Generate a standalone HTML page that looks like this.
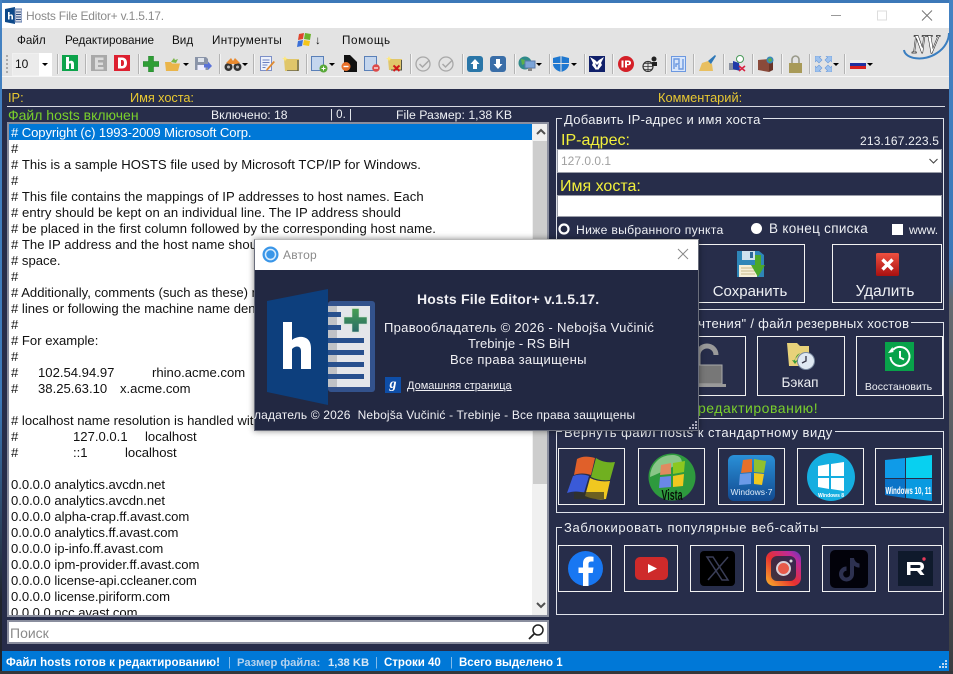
<!DOCTYPE html>
<html lang="ru"><head><meta charset="utf-8"><title>Hosts File Editor+</title>
<style>
*{box-sizing:border-box}
html,body{margin:0;padding:0;width:953px;height:674px;overflow:hidden;background:#3c78b8;font-family:"Liberation Sans","Noto Sans CJK SC",sans-serif}
.a,.t,svg.i{position:absolute}
.t{white-space:nowrap;line-height:16px;height:16px}
#bgr{position:absolute;left:949px;top:0;width:4px;height:674px;background:linear-gradient(#4482c2 0,#3c78b8 260px,#666a70 300px,#55585c 500px,#3a3c40 674px)}
#bgl{position:absolute;left:0;top:0;width:2px;height:674px;background:linear-gradient(#4482c2 0,#3c78b8 400px,#20242c 600px,#20242c 674px)}
#bgb{position:absolute;left:0;top:671px;width:953px;height:3px;background:#34363a}
#title{left:2px;top:3px;width:947px;height:25px;background:#fff}
#bar{left:2px;top:28px;width:947px;height:61px;background:#e3e3e3}
#main{left:2px;top:89px;width:947px;height:562px;background:#272d4a}
.m{font-size:11.7px;color:#111;top:33px}
.sep{position:absolute;top:54px;width:1px;height:20px;background:#b4b4b4;box-shadow:1px 0 0 #f4f4f4}
.dd{position:absolute;top:63px;width:0;height:0;border:3px solid transparent;border-top:3px solid #000;border-bottom:0}
.y{color:#e8c832;font-size:12.8px}
.w{color:#eef0f4}
#list{left:7px;top:122px;width:542px;height:495px;background:#fff;border:2px solid #8a8e9e;overflow:hidden}
#lines{position:absolute;left:0;top:0;width:523px;font-size:13.1px;color:#111}
#lines div{height:16px;line-height:18px;padding-left:2px;white-space:pre;position:relative}
#lines div.s{background:#0078d7;color:#fff;letter-spacing:-.1px}
#lines div.l{letter-spacing:.07px}
#lines div.d{letter-spacing:-.04px}
#lines span{position:absolute;top:0}
.g{position:absolute;border:1px solid #dfe2ea}
.gt{position:absolute;background:#272d4a;color:#eef0f4;font-size:13px;line-height:14px;white-space:nowrap;padding:0 2px}
.b{position:absolute;border:1px solid #f2f2f2}
.bl{position:absolute;color:#eef0f4;text-align:center;white-space:nowrap}
#dlg{left:254px;top:239px;width:445px;height:192px;background:#222842;box-shadow:0 0 6px rgba(0,0,0,.45);border:1px solid #6a6e7c;border-top:1px solid #bbb}
.dt{position:absolute;color:#f0f0f4;white-space:nowrap;line-height:16px;height:16px}
#status{left:2px;top:651px;width:947px;height:20px;background:#0078d7}
.st{position:absolute;top:655px;font-size:11.5px;font-weight:bold;color:#fff;line-height:16px;white-space:nowrap}
</style></head><body>
<div id="bgr"></div><div id="bgl"></div><div id="bgb"></div>

<div class="a" id="title"></div>
<svg class="i" style="left:5px;top:7px" width="17" height="17" viewBox="0 0 17 17"><path d="M0 2l10-2v17l-10-2z" fill="#0e4a8a"/><rect x="10" y="2" width="7" height="13" fill="#d6dbe6" stroke="#5a76a8"/><path d="M11 5h5M11 7.500h5M11 10h5M11 12.500h5" stroke="#2a4a80"/><path d="M3 5h1.600v3c1.800-1.200 3.400-.5 3.400 1.500v3H6.400v-3c0-1-1-1.200-1.800-.4v3.400H3z" fill="#fff"/></svg>
<div class="t" style="left:26px;top:8px;font-size:12px;color:#8a8a8a;letter-spacing:-.2px">Hosts File Editor+ v.1.5.17.</div>
<svg class="i" style="left:825px;top:8px" width="115" height="16" viewBox="0 0 115 16"><path d="M6 7.500h10" stroke="#999"/><rect x="52.500" y="3" width="9" height="9" fill="none" stroke="#ddd"/><path d="M97 2.500l10 10M107 2.500l-10 10" stroke="#777"/></svg>

<div class="a" id="bar"></div>
<div class="t m" style="left:17px">Файл</div>
<div class="t m" style="left:65px">Редактирование</div>
<div class="t m" style="left:172px">Вид</div>
<div class="t m" style="left:212px;letter-spacing:.3px">Интрументы</div>
<svg class="i" style="left:296px;top:33px" width="17" height="14" viewBox="0 0 17 14"><path d="M3 1l5-1-1 6-5 1z" fill="#e0452c"/><path d="M9 0l6 1-1 6-6-1z" fill="#6cb32c"/><path d="M2 8l5-1-1 6-5 1z" fill="#3a6fd8"/><path d="M8 7l6 1-1 5-6-1z" fill="#f5c518"/></svg>
<div class="t m" style="left:315px">↓</div>
<div class="t m" style="left:342px;letter-spacing:.6px">Помощь</div>

<div class="a" style="left:2px;top:76px;width:947px;height:1px;background:#f6f6f6"></div>
<div class="a" style="left:6px;top:55px;width:2px;height:18px;background:repeating-linear-gradient(#aaa 0 2px,transparent 2px 4px)"></div>
<div class="a" style="left:12px;top:53px;width:40px;height:23px;background:#ebebeb;border:1px solid #f0f0f0"></div>
<div class="a" style="left:39px;top:53px;width:13px;height:23px;background:#fff"></div>
<div class="t" style="left:15px;top:56px;font-size:12px;color:#111">10</div>
<div class="dd" style="left:42px;top:63px"></div>

<!-- separators -->
<i class="sep" style="left:57px"></i><i class="sep" style="left:85px"></i><i class="sep" style="left:138px"></i><i class="sep" style="left:219px"></i><i class="sep" style="left:253px"></i><i class="sep" style="left:306px"></i><i class="sep" style="left:410px"></i><i class="sep" style="left:462px"></i><i class="sep" style="left:514px"></i><i class="sep" style="left:549px"></i><i class="sep" style="left:584px"></i><i class="sep" style="left:612px"></i><i class="sep" style="left:665px"></i><i class="sep" style="left:693px"></i><i class="sep" style="left:723px"></i><i class="sep" style="left:752px"></i><i class="sep" style="left:781px"></i><i class="sep" style="left:809px"></i><i class="sep" style="left:844px"></i>

<!-- toolbar icons -->
<svg class="i" style="left:62px;top:55px" width="16" height="16" viewBox="0 0 16 16"><rect width="16" height="16" fill="#0da34b"/><path d="M4 2h3v4.500c2.500-1.500 5-.5 5 2.500v5H9V9.500c0-1.500-1.200-1.500-2-.7V14H4z" fill="#fff"/></svg>
<svg class="i" style="left:91px;top:55px" width="16" height="16" viewBox="0 0 16 16"><rect width="16" height="16" fill="#a9a9a9"/><path d="M4 2.500h8.500V5H7v2.500h5V10H7v2h5.500v2.500H4z" fill="#dcdcdc"/></svg>
<svg class="i" style="left:114px;top:55px" width="16" height="16" viewBox="0 0 16 16"><rect width="16" height="16" fill="#dd2030"/><path d="M4 2.500h4c3.500 0 5 2.500 5 5.500s-1.500 5.500-5 5.500H4zM7 5v6h1c1.500 0 2-1.200 2-3s-.5-3-2-3z" fill="#fff" fill-rule="evenodd"/></svg>
<svg class="i" style="left:143px;top:56px" width="16" height="16" viewBox="0 0 16 16"><path d="M5.500 0h5v5.500H16v5h-5.500V16h-5v-5.500H0v-5h5.500z" fill="#2f9e35" stroke="#1f7a28" stroke-width=".5"/></svg>
<svg class="i" style="left:165px;top:56px" width="16" height="16" viewBox="0 0 16 16"><path d="M0 6h6l1 1.500h8L13 15H1z" fill="#eab54a"/><path d="M6 6l3-4 1 2 3-1-2 4z" fill="#7ab648"/></svg>
<div class="dd" style="left:183px"></div>
<svg class="i" style="left:195px;top:57px" width="17" height="15" viewBox="0 0 17 15"><path d="M0 0h11l2 2v11H0z" fill="#8a94a8"/><rect x="3" y="1" width="6" height="4" fill="#dfe4ec"/><rect x="2.500" y="8" width="8" height="5" fill="#eef"/><path d="M9 7h4V4.500L17 9l-4 4v-2.500H9z" fill="#5a72d8"/></svg>
<svg class="i" style="left:224px;top:56px" width="18" height="16" viewBox="0 0 18 16"><circle cx="4.500" cy="11" r="4" fill="#333"/><circle cx="13.500" cy="11" r="4" fill="#333"/><path d="M2 7l5-5 2 3 2-3 5 5-4 1H6z" fill="#e88a30"/><circle cx="4.500" cy="11" r="1.500" fill="#bbb"/><circle cx="13.500" cy="11" r="1.500" fill="#bbb"/></svg>
<div class="dd" style="left:242px"></div>
<svg class="i" style="left:260px;top:56px" width="16" height="16" viewBox="0 0 16 16"><rect x=".5" y=".5" width="11" height="14" fill="#eef2fb" stroke="#7c8fc8"/><path d="M2.500 4h7M2.500 6.500h7M2.500 9h5M2.500 11.500h3" stroke="#6c80c0"/><path d="M15 6l-7 8-2 1 .5-2 7-8z" fill="#e08a30"/></svg>
<svg class="i" style="left:282px;top:56px" width="17" height="15" viewBox="0 0 17 15"><path d="M2 3h15v12H3z" fill="#e0c66a"/><path d="M16 4v11H5" fill="none" stroke="#554" stroke-width="1.200"/><path d="M3 0l.8 2 2 .8-2 .8L3 5.500l-.8-2L0 2.800l2-.8z" fill="#ffe97a"/></svg>
<svg class="i" style="left:311px;top:56px" width="17" height="17" viewBox="0 0 17 17"><rect x=".5" y=".5" width="12" height="14" fill="#c4d6ee" stroke="#5a80b8"/><circle cx="12.500" cy="12.500" r="4" fill="#58a838"/><path d="M10.500 12.500h4M12.500 10.500v4" stroke="#fff"/></svg>
<div class="dd" style="left:329px"></div>
<svg class="i" style="left:341px;top:55px" width="16" height="17" viewBox="0 0 16 17"><path d="M3 0h6l7 7v10H3z" fill="#111"/><circle cx="5" cy="11.500" r="4.500" fill="#e8702a"/><path d="M2.500 11.500h5" stroke="#fff" stroke-width="1.400"/></svg>
<svg class="i" style="left:364px;top:56px" width="16" height="16" viewBox="0 0 16 16"><rect x=".5" y=".5" width="12" height="14" fill="#c4d6ee" stroke="#5a80b8"/><circle cx="12" cy="12" r="3.800" fill="#dc4a4a"/><path d="M10 12h4" stroke="#fff" stroke-width="1.200"/></svg>
<svg class="i" style="left:386px;top:56px" width="17" height="16" viewBox="0 0 17 16"><path d="M2 3h14v11H3z" fill="#e0c66a"/><path d="M15.500 4v10H5" fill="none" stroke="#554"/><path d="M3 0l.8 2 2 .8-2 .8L3 5.500l-.8-2L0 2.800l2-.8z" fill="#ffe97a"/><path d="M7.500 9.500l6 5.500M13.500 9.500l-6 5.500" stroke="#d01818" stroke-width="2"/></svg>
<svg class="i" style="left:415px;top:56px" width="17" height="16" viewBox="0 0 17 16"><g fill="none" stroke="#a8a8a8"><circle cx="8" cy="8" r="7" stroke-width="1.300"/><path d="M4.500 8l3 3 7-7" stroke-width="1.500"/></g></svg>
<svg class="i" style="left:438px;top:56px" width="17" height="16" viewBox="0 0 17 16"><g fill="none" stroke="#a8a8a8"><circle cx="8" cy="8" r="7" stroke-width="1.300"/><path d="M4.500 8l3 3 7-7" stroke-width="1.500"/></g></svg>
<svg class="i" style="left:467px;top:56px" width="16" height="16" viewBox="0 0 16 16"><rect width="16" height="16" rx="3" fill="#2a76a8"/><path d="M8 3l4.500 5H10v5H6V8H3.500z" fill="#fff"/></svg>
<svg class="i" style="left:490px;top:56px" width="16" height="16" viewBox="0 0 16 16"><rect width="16" height="16" rx="3" fill="#3a6ea8"/><path d="M8 13L3.500 8H6V3h4v5h2.500z" fill="#fff"/></svg>
<svg class="i" style="left:518px;top:56px" width="18" height="16" viewBox="0 0 18 16"><circle cx="7" cy="7" r="6.500" fill="#2f8a8a"/><path d="M3 3l4 1 1 3-4 2z" fill="#5cb04a"/><rect x="7" y="5" width="10" height="7" fill="#7ca4d8" stroke="#5a7aa8"/><rect x="10" y="12" width="4" height="3" fill="#888"/></svg>
<div class="dd" style="left:536px"></div>
<svg class="i" style="left:553px;top:56px" width="16" height="16" viewBox="0 0 16 16"><path d="M8 0l8 2v6c0 4-4 7-8 8-4-1-8-4-8-8V2z" fill="#1f78d0"/><path d="M8 0v16M0 7.500h16" stroke="#e3e3e3"/></svg>
<div class="dd" style="left:571px"></div>
<svg class="i" style="left:589px;top:56px" width="16" height="16" viewBox="0 0 16 16"><rect width="16" height="16" fill="#10206a"/><path d="M1 1l5 3 2 2 2-2 5-3-3 6 1 2-4 5-1-1-1 1-4-5 1-2z" fill="#fff"/><path d="M8 9l2-2-2 5-2-5z" fill="#10206a"/></svg>
<svg class="i" style="left:618px;top:56px" width="16" height="16" viewBox="0 0 16 16"><circle cx="8" cy="8" r="8" fill="#d42028"/><path d="M3.500 4.500h2v7h-2zM7 4.500h3c2 0 3 1 3 2.400s-1 2.400-3 2.400H9v2.200H7zM9 6v2h.8c.8 0 1.200-.4 1.200-1s-.4-1-1.200-1z" fill="#fff" fill-rule="evenodd"/></svg>
<svg class="i" style="left:642px;top:56px" width="16" height="16" viewBox="0 0 16 16"><circle cx="6" cy="10.500" r="5" fill="none" stroke="#333" stroke-width="1.200"/><path d="M1 10.500h10M6 5.500v10M2.500 7.500h7M2.500 13.500h7" stroke="#333" stroke-width=".8"/><circle cx="12" cy="3" r="2.500" fill="#222"/><rect x="10" y="6" width="5" height="4" fill="#222"/></svg>
<svg class="i" style="left:671px;top:56px" width="15" height="16" viewBox="0 0 15 16"><rect x=".5" y=".5" width="14" height="15" fill="#d8e6fb" stroke="#6c98e0"/><path d="M3 13V3h5v5H5v3M12 3v10H8V9" fill="none" stroke="#6c98e0" stroke-width="1.400"/></svg>
<svg class="i" style="left:699px;top:55px" width="17" height="17" viewBox="0 0 17 17"><path d="M0 16l3-8 6-2 4 3 1 7z" fill="#e8bf60"/><path d="M9 6l7-6 1 1-5 8z" fill="#2e78b8"/></svg>
<svg class="i" style="left:729px;top:55px" width="17" height="17" viewBox="0 0 17 17"><rect x="0" y="8" width="8" height="7" fill="#8890a0"/><path d="M4 6l6 2 1 8-7-2z" fill="#1f3aa8"/><circle cx="11" cy="4" r="3.500" fill="#fff" stroke="#4a9a5a"/><path d="M10 11l6 5M16 11l-6 5" stroke="#d82040" stroke-width="1.500"/></svg>
<svg class="i" style="left:758px;top:56px" width="17" height="16" viewBox="0 0 17 16"><path d="M0 4l11-1v13L0 14z" fill="#8a4a3a"/><path d="M11 3l4 1v10l-4 2z" fill="#6a3428"/><circle cx="12" cy="4" r="3.500" fill="#3a8ab8"/><path d="M10 3l3-1 1 3-3 1z" fill="#5cb04a"/></svg>
<svg class="i" style="left:789px;top:55px" width="13" height="18" viewBox="0 0 13 18"><path d="M3 8V4.500a3.500 3.500 0 0 1 7 0V8" fill="none" stroke="#9a9a8a" stroke-width="1.600"/><rect y="8" width="13" height="10" fill="#a89a58"/></svg>
<svg class="i" style="left:815px;top:56px" width="17" height="16" viewBox="0 0 17 16"><g fill="#9ec2ee" stroke="#6c9ad8" stroke-width=".6"><path d="M0 0h6L4.500 1.500 7 4 4 7 1.500 4.500 0 6z"/><path d="M17 0h-6l1.500 1.500L10 4l3 3 2.500-2.500L17 6z"/><path d="M0 16h6l-1.500-1.500L7 12 4 9l-2.500 2.500L0 10z"/><path d="M17 16h-6l1.500-1.500L10 12l3-3 2.500 2.500L17 10z"/></g></svg>
<div class="dd" style="left:833px"></div>
<svg class="i" style="left:850px;top:60px" width="16" height="9" viewBox="0 0 16 9"><rect width="16" height="3" fill="#eee"/><rect y="3" width="16" height="3" fill="#2030a0"/><rect y="6" width="16" height="3" fill="#d82020"/></svg>
<div class="dd" style="left:867px"></div>

<svg class="i" style="left:903px;top:31px" width="47" height="31" viewBox="0 0 47 31"><path d="M1 19c1 9 20 12 33 3 8-5 12-13 12-20" fill="none" stroke="#3a7ec0" stroke-width="2"/><text x="9" y="22" font-family="Liberation Serif,serif" font-style="italic" font-weight="bold" font-size="26" fill="#fff" stroke="#222" stroke-width=".7" textLength="27" lengthAdjust="spacingAndGlyphs">NV</text></svg>

<!-- main -->
<div class="a" id="main"></div>
<div class="t y" style="left:8px;top:90px">IP:</div>
<div class="t y" style="left:130px;top:90px;letter-spacing:-.08px">Имя хоста:</div>
<div class="t y" style="left:658px;top:90px">Комментарий:</div>
<div class="a" style="left:7px;top:106px;width:938px;height:1px;background:#d8dae2"></div>
<div class="t" style="left:8px;top:107px;font-size:14px;color:#7ad02c">Файл hosts включен</div>
<div class="t w" style="left:211px;top:107px;font-size:12.2px">Включено: 18</div>
<div class="t w" style="left:330px;top:107px;font-size:11.5px">| 0. |</div>
<div class="t w" style="left:396px;top:107px;font-size:12.3px">File Размер: 1,38 KB</div>

<div class="a" id="list">
<div id="lines">
<div class="s"># Copyright (c) 1993-2009 Microsoft Corp.</div>
<div>#</div>
<div class="l"># This is a sample HOSTS file used by Microsoft TCP/IP for Windows.</div>
<div>#</div>
<div class="l"># This file contains the mappings of IP addresses to host names. Each</div>
<div class="l"># entry should be kept on an individual line. The IP address should</div>
<div class="l"># be placed in the first column followed by the corresponding host name.</div>
<div class="l"># The IP address and the host name should be separated by at least one</div>
<div># space.</div>
<div>#</div>
<div># Additionally, comments (such as these) may be inserted on individual</div>
<div># lines or following the machine name denoted by a '#' symbol.</div>
<div>#</div>
<div># For example:</div>
<div>#</div>
<div>#<span style="left:29px">102.54.94.97</span><span style="left:143px">rhino.acme.com</span><span style="left:260px"># source server</span></div>
<div>#<span style="left:29px">38.25.63.10</span><span style="left:111px">x.acme.com</span><span style="left:252px"># x client host</span></div>
<div></div>
<div># localhost name resolution is handled within DNS itself.</div>
<div>#<span style="left:64px">127.0.0.1</span><span style="left:136px">localhost</span></div>
<div>#<span style="left:64px">::1</span><span style="left:116px">localhost</span></div>
<div></div>
<div class="d">0.0.0.0 analytics.avcdn.net</div>
<div class="d">0.0.0.0 analytics.avcdn.net</div>
<div class="d">0.0.0.0 alpha-crap.ff.avast.com</div>
<div class="d">0.0.0.0 analytics.ff.avast.com</div>
<div class="d">0.0.0.0 ip-info.ff.avast.com</div>
<div class="d">0.0.0.0 ipm-provider.ff.avast.com</div>
<div class="d">0.0.0.0 license-api.ccleaner.com</div>
<div class="d">0.0.0.0 license.piriform.com</div>
<div class="d">0.0.0.0 ncc.avast.com</div>
</div>
<div class="a" style="left:523px;top:0;width:17px;height:491px;background:#f0f0f0"></div>
<div class="a" style="left:524px;top:17px;width:16px;height:343px;background:#cdcdcd"></div>
<svg class="i" style="left:524px;top:0" width="16" height="491" viewBox="0 0 16 491"><path d="M4 10l4-4 4 4" fill="none" stroke="#505050" stroke-width="2"/><path d="M4 479l4 4 4-4" fill="none" stroke="#505050" stroke-width="2"/></svg>
</div>

<div class="a" style="left:7px;top:620px;width:542px;height:24px;background:#fff;border:2px solid #8a8e9e"></div>
<div class="t" style="left:10px;top:625px;font-size:14px;color:#8a8a8a">Поиск</div>
<svg class="i" style="left:527px;top:623px" width="19" height="18" viewBox="0 0 19 18"><circle cx="11" cy="7" r="5" fill="none" stroke="#222" stroke-width="1.500"/><path d="M7 11l-5 5" stroke="#222" stroke-width="1.800"/></svg>

<!-- group 1 -->
<div class="g" style="left:556px;top:118px;width:388px;height:192px"></div>
<div class="gt" style="left:562px;top:113px;letter-spacing:.3px">Добавить IP-адрес и имя хоста</div>
<div class="t" style="left:561px;top:133px;font-size:16px;color:#f2f03c">IP-адрес:</div>
<div class="t w" style="left:860px;top:133px;font-size:12px;letter-spacing:.18px">213.167.223.5</div>
<div class="a" style="left:557px;top:149px;width:385px;height:24px;background:#fff;border:1px solid #9a9da8"></div>
<div class="t" style="left:561px;top:153px;font-size:12px;color:#a0a0a0">127.0.0.1</div>
<svg class="i" style="left:928px;top:157px" width="11" height="8" viewBox="0 0 11 8"><path d="M1.500 2l4 4 4-4" fill="none" stroke="#444" stroke-width="1.100"/></svg>
<div class="t" style="left:560px;top:179px;font-size:16px;color:#f2f03c">Имя хоста:</div>
<div class="a" style="left:557px;top:195px;width:385px;height:22px;background:#fff;border:1px solid #9a9da8"></div>
<svg class="i" style="left:557px;top:222px" width="14" height="14" viewBox="0 0 14 14"><circle cx="7" cy="7" r="4.500" fill="#222842" stroke="#fff" stroke-width="2.200"/></svg>
<div class="t w" style="left:576px;top:222px;font-size:12.2px;letter-spacing:.28px">Ниже выбранного пункта</div>
<svg class="i" style="left:750px;top:222px" width="13" height="13" viewBox="0 0 13 13"><circle cx="6.500" cy="6.500" r="5.500" fill="#fff"/></svg>
<div class="t w" style="left:769px;top:221px;font-size:13.5px;letter-spacing:.3px">В конец списка</div>
<div class="a" style="left:892px;top:224px;width:11px;height:11px;background:#fff"></div>
<div class="t w" style="left:909px;top:222px;font-size:12.2px">www.</div>

<div class="b" style="left:690px;top:244px;width:115px;height:59px"></div>
<svg class="i" style="left:737px;top:250px" width="28" height="28" viewBox="0 0 28 28"><path d="M0 1h22l5 4v22H0z" fill="#2e86b8"/><rect x="5" y="1" width="13" height="9" fill="#cfe2ee"/><rect x="13" y="2" width="3" height="6" fill="#2e6a98"/><rect x="2" y="15" width="18" height="12" fill="#f5efd8"/><path d="M4 18h14M4 21h14M4 24h14" stroke="#c8b88a"/><path d="M18 5h6v10h4l-7 12-7-12h4z" fill="#4ca82a"/></svg>
<div class="bl" style="left:695px;top:283px;width:110px;font-size:15px;line-height:17px">Сохранить</div>
<div class="b" style="left:832px;top:244px;width:110px;height:59px"></div>
<svg class="i" style="left:876px;top:253px" width="23" height="23" viewBox="0 0 23 23"><defs><linearGradient id="rg" x1="0" y1="0" x2="0" y2="1"><stop offset="0" stop-color="#ee5040"/><stop offset="1" stop-color="#a81010"/></linearGradient></defs><rect width="23" height="23" rx="1.500" fill="url(#rg)"/><path d="M6.500 6.500l10 10M16.500 6.500l-10 10" stroke="#fff" stroke-width="3.400"/></svg>
<div class="bl" style="left:830px;top:283px;width:110px;font-size:15.4px;line-height:17px">Удалить</div>

<!-- group 2 -->
<div class="g" style="left:556px;top:322px;width:388px;height:97px"></div>
<div class="gt" style="left:581px;top:317px;letter-spacing:.32px">Файл "только для чтения" / файл резервных хостов</div>
<div class="b" style="left:660px;top:336px;width:86px;height:60px"></div>
<svg class="i" style="left:680px;top:343px" width="46" height="47" viewBox="0 0 46 47"><path d="M18 22V12a9 9 0 0 1 18 0" fill="none" stroke="#9a9a9a" stroke-width="5"/><rect x="5" y="22" width="37" height="19" fill="#777" stroke="#aaa"/><path d="M2 41h44v3H2z" fill="#9a9a9a"/></svg>
<div class="b" style="left:757px;top:336px;width:88px;height:60px"></div>
<svg class="i" style="left:786px;top:342px" width="30" height="28" viewBox="0 0 30 28"><path d="M1 1h10l3 3h9v20H3z" fill="#e8d27a"/><circle cx="20" cy="19" r="8.500" fill="#dfe8f2" stroke="#7a8aa0"/><path d="M20 14v5l-4 2" stroke="#334" fill="none" stroke-width="1.300"/><path d="M14 11a9 9 0 0 0-5 8l3-1-3 4-3-4 2 .5" fill="#3a9a3a"/></svg>
<div class="bl" style="left:756px;top:375px;width:88px;font-size:13.6px;line-height:16px">Бэкап</div>
<div class="b" style="left:856px;top:336px;width:87px;height:60px"></div>
<svg class="i" style="left:885px;top:342px" width="29" height="29" viewBox="0 0 29 29"><rect width="29" height="29" fill="#08a24a"/><path d="M8 8a9.500 9.500 0 1 1-2.500 7" fill="none" stroke="#fff" stroke-width="2"/><path d="M3 11l5.500-1-1-5z" fill="#fff"/><path d="M15 9v6.500l4 2" fill="none" stroke="#fff" stroke-width="2"/></svg>
<div class="bl" style="left:855px;top:380px;width:87px;font-size:10.5px;line-height:14px">Восстановить</div>
<div class="t" style="left:698px;top:400px;font-size:14px;color:#7ad02c;letter-spacing:.52px">редактированию!</div>

<!-- group 3 -->
<div class="g" style="left:556px;top:431px;width:388px;height:82px"></div>
<div class="gt" style="left:562px;top:426px;letter-spacing:.5px">Вернуть файл hosts к стандартному виду</div>
<div class="b" style="left:558px;top:448px;width:67px;height:57px"></div>
<svg class="i" style="left:566px;top:455px" width="50" height="46" viewBox="0 0 50 46"><path d="M11 4c5-3 11-3 18-1l-4 17c-6-2-12-2-17 0z" fill="#e0602a"/><path d="M30 3c6 4 13 5 19 4l-5 18c-6 1-13 0-19-3z" fill="#70b020"/><path d="M7 21c5-2 11-2 16 0l-5 17c-5-2-11-2-17 0z" fill="#3a5ad8"/><path d="M24 23c6 3 13 4 20 3l-4 18c-7 1-14 0-21-3z" fill="#f0c820"/><rect x="8" y="37" width="30" height="7" fill="#332" opacity=".7"/></svg>
<div class="b" style="left:638px;top:448px;width:67px;height:57px"></div>
<svg class="i" style="left:648px;top:453px" width="48" height="48" viewBox="0 0 48 48"><circle cx="24" cy="24" r="23.500" fill="#2e9a3e"/><path d="M2 24A22 22 0 0 1 24 2c8 0 10 4 10 8-8 3-20 9-32 14z" fill="#b0d8a8" opacity=".7"/><path d="M13 12l10-2v11l-11 1z" fill="#e08a60"/><path d="M25 10l12-2-1 11-11 2z" fill="#8cc820"/><path d="M12 24l11-1v11l-12 1z" fill="#6a88e8"/><path d="M25 23l11-2-1 12-10 1z" fill="#f0c820"/><text x="24" y="47" text-anchor="middle" font-family="Liberation Sans,sans-serif" font-weight="bold" font-size="15" fill="#061206" textLength="21" lengthAdjust="spacingAndGlyphs">Vista</text></svg>
<div class="b" style="left:718px;top:448px;width:67px;height:57px"></div>
<svg class="i" style="left:728px;top:455px" width="47" height="46" viewBox="0 0 47 46"><defs><linearGradient id="w7" x1="0" y1="0" x2="0" y2="1"><stop offset="0" stop-color="#2a90d8"/><stop offset="1" stop-color="#124a90"/></linearGradient></defs><rect width="47" height="46" rx="6" fill="url(#w7)"/><path d="M15 5l9-1v13l-11 1z" fill="#e8702a"/><path d="M26 4l12 2-2 12-10-1z" fill="#90c030"/><path d="M12 19l11-1v11l-12 1z" fill="#6a9ae8"/><path d="M26 18l10 1-2 11-8-1z" fill="#f0c820"/><text x="23.500" y="40" text-anchor="middle" font-family="Liberation Sans,sans-serif" font-size="8.500" fill="#dfeaf8" textLength="42" lengthAdjust="spacingAndGlyphs">Windows·7</text></svg>
<div class="b" style="left:797px;top:448px;width:67px;height:57px"></div>
<svg class="i" style="left:807px;top:453px" width="48" height="48" viewBox="0 0 48 48"><circle cx="24" cy="24" r="24" fill="#15aee0"/><path d="M11 13l11-2v12H11zM24 11l13-2v14H24zM11 25h11v11l-11-2zM24 25h13v13l-13-2z" fill="#fff"/><text x="24" y="44" text-anchor="middle" font-family="Liberation Sans,sans-serif" font-weight="bold" font-size="5" fill="#fff">Windows 8</text></svg>
<div class="b" style="left:875px;top:448px;width:67px;height:57px"></div>
<svg class="i" style="left:885px;top:455px" width="47" height="46" viewBox="0 0 47 46"><path d="M0 5l20-2v20H0z" fill="#0f9be8"/><path d="M21 3L47 0v23H21z" fill="#08d0f0"/><path d="M0 24h20v19L0 40z" fill="#0a74c8"/><path d="M21 24h26v22l-26-3z" fill="#0a9ae0"/><text x="23.500" y="39" text-anchor="middle" font-family="Liberation Sans,sans-serif" font-weight="bold" font-size="10" fill="#fff" textLength="46" lengthAdjust="spacingAndGlyphs">Windows 10, 11</text></svg>

<!-- group 4 -->
<div class="g" style="left:556px;top:527px;width:388px;height:88px"></div>
<div class="gt" style="left:562px;top:521px;letter-spacing:.65px">Заблокировать популярные веб-сайты</div>
<div class="b" style="left:558px;top:545px;width:54px;height:47px"></div>
<svg class="i" style="left:568px;top:551px" width="35" height="35" viewBox="0 0 35 35"><circle cx="17.500" cy="17.500" r="17.500" fill="#1877f2"/><path d="M15 35V22h-4.500v-5.500H15v-4c0-4.500 2.700-7 6.800-7 2 0 3.700.3 3.700.3V10.500h-2.300c-2.200 0-2.700 1.400-2.700 2.800v3.200h5l-.8 5.500h-4.200v13z" fill="#fff"/></svg>
<div class="b" style="left:624px;top:545px;width:54px;height:47px"></div>
<svg class="i" style="left:635px;top:557px" width="33" height="24" viewBox="0 0 33 24"><rect width="33" height="23" rx="5" fill="#ce2a2a"/><path d="M13 7l9 4.500-9 4.500z" fill="#fff"/></svg>
<div class="b" style="left:690px;top:545px;width:54px;height:47px"></div>
<svg class="i" style="left:700px;top:551px" width="35" height="35" viewBox="0 0 35 35"><rect width="35" height="35" rx="4" fill="#000"/><path d="M7 6h6l15 23h-6zM28 6L8 29" fill="none" stroke="#3a3e58" stroke-width="1.500"/></svg>
<div class="b" style="left:756px;top:545px;width:54px;height:47px"></div>
<svg class="i" style="left:766px;top:551px" width="35" height="35" viewBox="0 0 35 35"><defs><linearGradient id="ig" x1="0" y1="1" x2="1" y2="0"><stop offset="0" stop-color="#f9b62a"/><stop offset=".45" stop-color="#e8302f"/><stop offset=".8" stop-color="#c02a9a"/><stop offset="1" stop-color="#5a3ac0"/></linearGradient></defs><rect width="35" height="35" rx="8" fill="url(#ig)"/><rect x="5" y="5" width="25" height="25" rx="6" fill="#242844" opacity=".85"/><circle cx="17.500" cy="17.500" r="6.500" fill="#e85a4a" stroke="#d8d0d8" stroke-width="2"/><circle cx="25" cy="10" r="1.500" fill="#ddd"/></svg>
<div class="b" style="left:822px;top:545px;width:54px;height:47px"></div>
<svg class="i" style="left:830px;top:550px" width="38" height="38" viewBox="0 0 38 38"><rect width="38" height="38" rx="5" fill="#02020a"/><path d="M20 8h4c.5 3 2.500 5 5.500 5.500v4c-2 0-4-.6-5.500-1.800V24a7.500 7.500 0 1 1-7.500-7.500v4.200A3.400 3.400 0 1 0 20 24z" fill="#2d3150"/></svg>
<div class="b" style="left:888px;top:545px;width:54px;height:47px"></div>
<svg class="i" style="left:898px;top:551px" width="35" height="35" viewBox="0 0 35 35"><rect width="35" height="35" fill="#0f1a2c"/><path d="M9 11h12c3 0 5 1.500 5 4.500 0 2-1 3.400-3 4l3.500 4.500h-4L19 20h-6.500v4H9zM12.500 14v3H21c1 0 1.500-.5 1.500-1.500S22 14 21 14z" fill="#fff" fill-rule="evenodd"/><circle cx="26" cy="8" r="1.700" fill="#e83a5a"/></svg>

<!-- status -->
<div class="a" id="status"></div>
<div class="st" style="left:6px;letter-spacing:.08px">Файл hosts готов к редактированию!</div>
<div class="st" style="left:228px;color:#8cc0ec;font-weight:normal">|</div>
<div class="st" style="left:237px;color:#b4d2ee;font-size:11.2px">Размер файла:</div>
<div class="st" style="left:328px;color:#d8e8f6;font-size:11.2px">1,38 KB</div>
<div class="st" style="left:375px;color:#8cc0ec;font-weight:normal">|</div>
<div class="st" style="left:384px">Строки 40</div>
<div class="st" style="left:450px;color:#8cc0ec;font-weight:normal">|</div>
<div class="st" style="left:459px">Всего выделено 1</div>
<svg class="i" style="left:938px;top:659px" width="10" height="10" viewBox="0 0 10 10"><g fill="#bcd8f0"><rect x="7" y="1" width="2" height="2"/><rect x="4" y="4" width="2" height="2"/><rect x="7" y="4" width="2" height="2"/><rect x="1" y="7" width="2" height="2"/><rect x="4" y="7" width="2" height="2"/><rect x="7" y="7" width="2" height="2"/></g></svg>

<!-- dialog -->
<div class="a" id="dlg">
  <div class="a" style="left:0;top:0;width:443px;height:30px;background:#fff"></div>
  <svg class="i" style="left:7px;top:6px" width="17" height="17" viewBox="0 0 17 17"><circle cx="8.500" cy="8.500" r="8" fill="#3a96e8"/><circle cx="8.500" cy="8.500" r="5" fill="none" stroke="#d8ecfc" stroke-width="1.500"/><circle cx="9.500" cy="8.500" r="2.500" fill="#3a96e8"/></svg>
  <div class="dt" style="left:28px;top:7px;font-size:12px;color:#8a8a8a;letter-spacing:.2px">Автор</div>
  <svg class="i" style="left:422px;top:8px" width="13" height="13" viewBox="0 0 13 13"><path d="M1 1l10 10M11 1L1 11" stroke="#888"/></svg>

  <svg class="i" style="left:12px;top:49px" width="110" height="116" viewBox="0 0 110 116"><defs><linearGradient id="pl" x1="0" y1="0" x2="0" y2="1"><stop offset="0" stop-color="#48a052"/><stop offset="1" stop-color="#286a68"/></linearGradient></defs><rect x="61" y="12" width="47" height="91" rx="3" fill="#33528c"/><rect x="61" y="17" width="42" height="81" fill="#e4e6ea"/><rect x="61" y="17" width="9" height="81" fill="#c0c2c6"/><g fill="#27508e"><rect x="61" y="23" width="13" height="5"/><rect x="61" y="36" width="13" height="5"/><rect x="61" y="49" width="36" height="5"/><rect x="61" y="61" width="36" height="5"/><rect x="61" y="73" width="36" height="5"/><rect x="61" y="85" width="36" height="5"/></g><path d="M84.500 19h8v8.500h8v8h-8v8h-8v-8h-8v-8h8z" fill="url(#pl)" stroke="#dde6e0" stroke-width="1.500"/><path d="M0 12L61 0v116L0 103z" fill="#0d3f7d"/><path d="M16 33h9v18c6-5 19-5 19 8v21H34V62c0-5-5-6-9-2v20H16z" fill="#fff"/></svg>

  <div class="dt" style="left:162px;top:51px;font-size:14px;font-weight:bold;letter-spacing:.2px">Hosts File Editor+ v.1.5.17.</div>
  <div class="dt" style="left:129px;top:80px;font-size:13px;letter-spacing:.3px">Правообладатель © 2026 - Nebojša Vučinić</div>
  <div class="dt" style="left:213px;top:96px;font-size:13px;letter-spacing:.08px">Trebinje - RS BiH</div>
  <div class="dt" style="left:195px;top:112px;font-size:13px;letter-spacing:.35px">Все права защищены</div>
  <div class="a" style="left:130px;top:137px;width:16px;height:16px;background:#0e4ea8;color:#fff;font:italic bold 14px/15px 'Liberation Serif',serif;text-align:center">g</div>
  <div class="dt" style="left:152px;top:138px;font-size:11px;text-decoration:underline">Домашняя страница</div>
  <div class="dt" style="left:-1px;top:167px;font-size:12px;letter-spacing:.16px">ладатель © 2026&nbsp; Nebojša Vučinić - Trebinje - Все права защищены</div>
  <svg class="i" style="left:434px;top:181px" width="9" height="9" viewBox="0 0 9 9"><g fill="#aab"><rect x="6" y="0" width="2" height="2"/><rect x="3" y="3" width="2" height="2"/><rect x="6" y="3" width="2" height="2"/><rect x="0" y="6" width="2" height="2"/><rect x="3" y="6" width="2" height="2"/><rect x="6" y="6" width="2" height="2"/></g></svg>
</div>
</body></html>
